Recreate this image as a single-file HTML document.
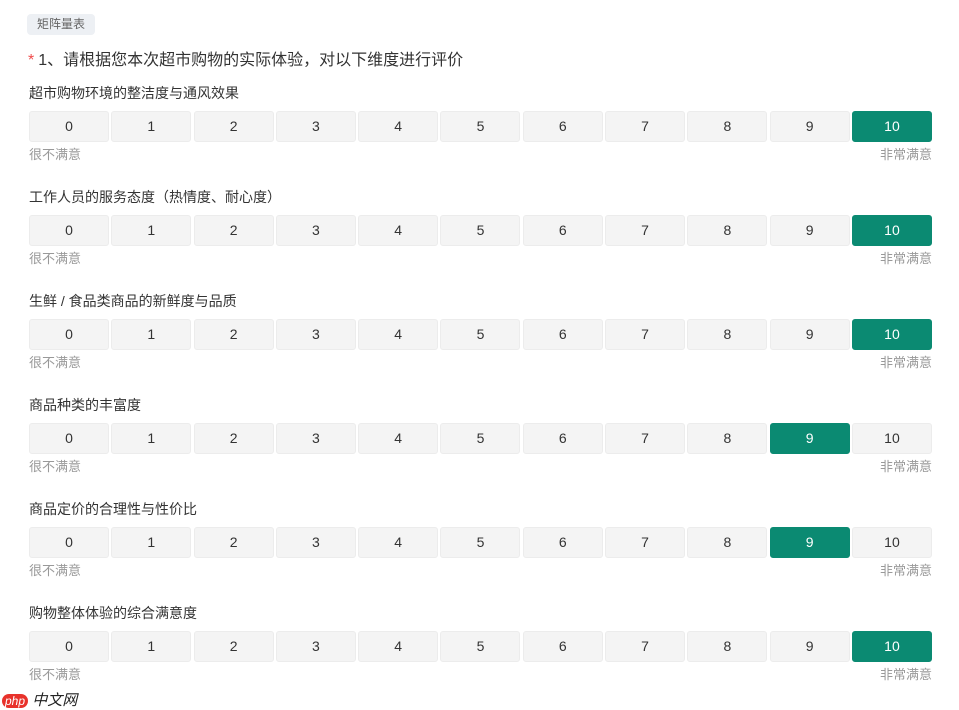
<!DOCTYPE html>
<html><head><meta charset="utf-8"><style>
body{margin:0;width:959px;height:708px;background:#fff;font-family:"Liberation Sans","Noto Sans CJK SC",sans-serif;position:relative;overflow:hidden}
.tag{position:absolute;left:27px;top:14px;width:68px;height:21px;background:#edf0f4;border-radius:4px;font-size:12px;color:#666;text-align:center;line-height:21px}
.q{position:absolute;left:28px;top:50px;font-size:16px;color:#333;line-height:22px}
.q b{color:#f04b4b;font-weight:normal;margin-right:4px}
.t{position:absolute;left:29px;font-size:14px;color:#333;line-height:20px}
.row{position:absolute;left:29px;width:903px;height:31px;display:flex;gap:2.3px}
.row div{flex:1;background:#f4f4f4;border:1px solid #ececec;border-radius:3px;box-sizing:border-box;text-align:center;line-height:29px;font-size:14px;color:#333}
.row div.s{background:#0b8a72;border-color:#0b8a72;color:#fff}
.c{position:absolute;font-size:13px;color:#999;line-height:18px}
.logo{position:absolute;left:2px;top:689px;font-size:15px;font-style:italic}
</style></head><body>
<div class="tag">矩阵量表</div>
<div class="q"><b>*</b>1、请根据您本次超市购物的实际体验，对以下维度进行评价</div>
<div id="g"></div>
<div class="logo"><span style="background:#e8322b;color:#fff;border-radius:9px;padding:0 3px;font-size:12px">php</span><span style="color:#222"> 中文网</span></div>
<script>
var titles=["超市购物环境的整洁度与通风效果","工作人员的服务态度（热情度、耐心度）","生鲜 / 食品类商品的新鲜度与品质","商品种类的丰富度","商品定价的合理性与性价比","购物整体体验的综合满意度"];
var sel=[10,10,10,9,9,10],h="";
for(var i=0;i<6;i++){var y=104*i;
h+='<div class="t" style="top:'+(83+y)+'px">'+titles[i]+'</div><div class="row" style="top:'+(111+y)+'px">';
for(var k=0;k<=10;k++)h+='<div'+(k==sel[i]?' class="s"':'')+'>'+k+'</div>';
h+='</div><div class="c" style="left:29px;top:'+(146+y)+'px">很不满意</div><div class="c" style="right:27px;top:'+(146+y)+'px">非常满意</div>';}
document.getElementById("g").innerHTML=h;
</script>
</body></html>
